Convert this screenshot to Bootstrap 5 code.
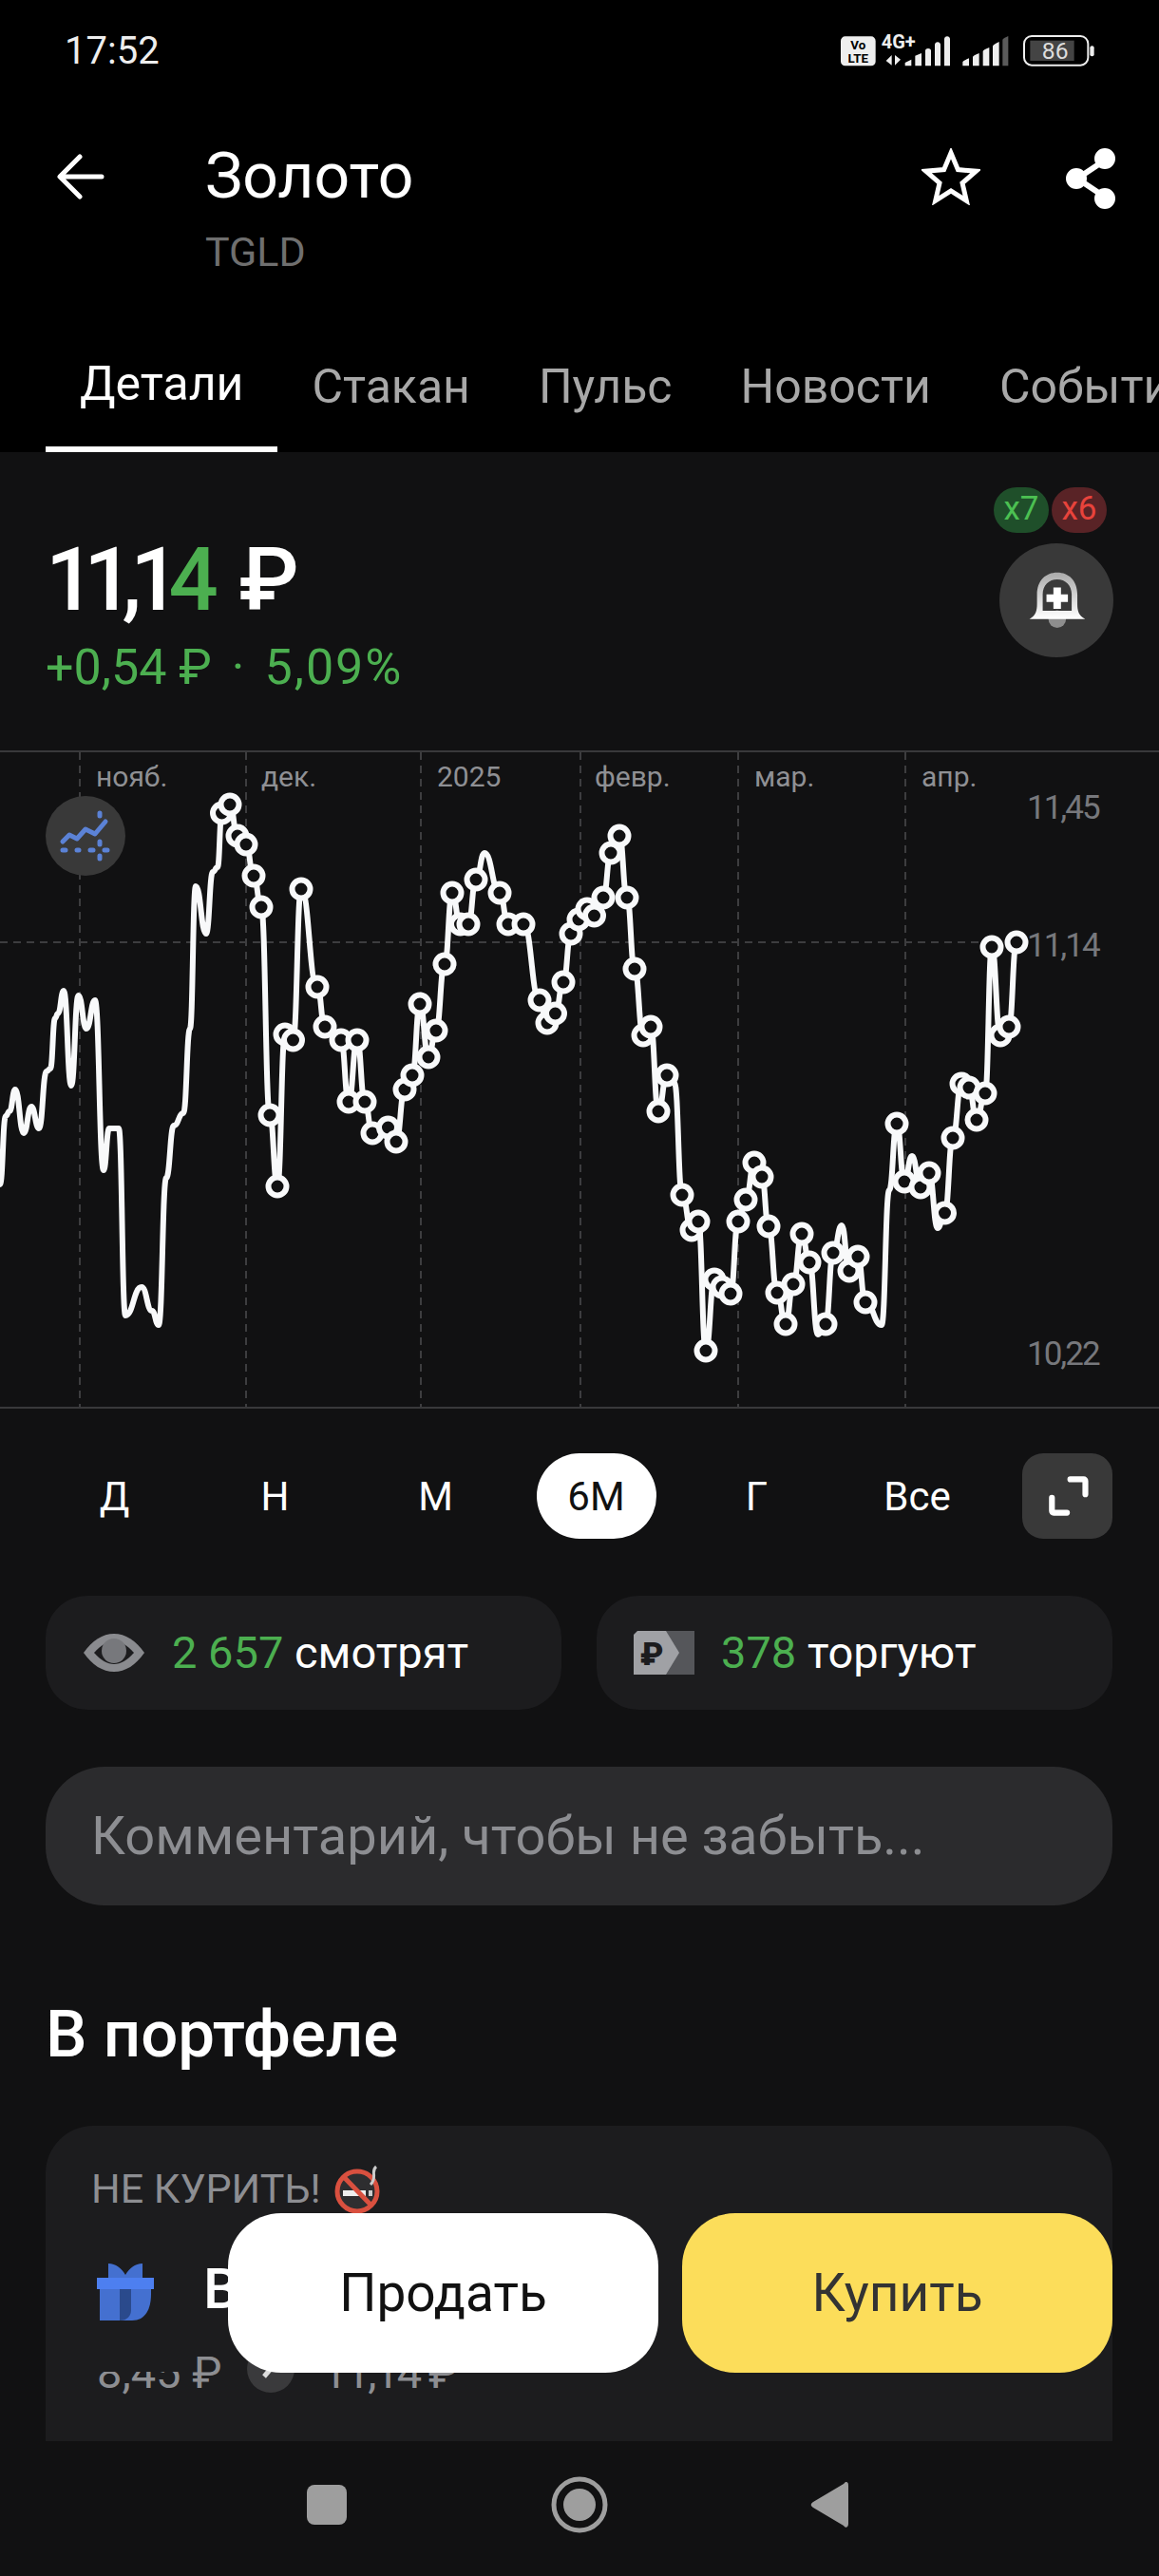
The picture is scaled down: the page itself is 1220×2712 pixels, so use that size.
<!DOCTYPE html>
<html lang="ru">
<head>
  <meta charset="UTF-8">
  <title>Золото TGLD</title>
  <link rel="stylesheet" href="https://cdn.jsdelivr.net/npm/bootstrap@5.3.0/dist/css/bootstrap.min.css">
  <style>
    body {
      margin: 0;
      background: #111112;
      font-family: Roboto, "Liberation Sans", sans-serif;
      color: #fff;
    }
    .app-screen { width: 1220px; height: 2712px; background: #111112; }
    .top-head { background: #000; height: 476px; }
    .status-row { height: 106px; padding-left: 68px; }
    .status-time { font-size: 40px; line-height: 108px; color: #eee; }
    .title-row { height: 170px; padding: 0 44px 0 60px; }
    .back-icon { margin-top: 56px; }
    .title-text { margin-left: 106px; }
    .title-name { font-size: 66px; line-height: 74px; margin: 43px 0 0; font-weight: 400; }
    .title-code { font-size: 43px; line-height: 50px; margin-top: 17px; color: #6f6f6f; }
    .head-actions { margin-top: 50px; gap: 88px; }
    .tabs-row { padding-left: 48px; height: 200px; gap: 0; }
    .tab-item {
      font-size: 50px; line-height: 60px; color: #a8a8a8; padding: 62px 36px 0; height: 100%;
      white-space: nowrap; flex: none;
    }
    .tab-item.active { color: #fff; border-bottom: 6px solid #fff; }

    .price-block { height: 314px; padding: 36px 48px 0; }
    .price-value {
      font-size: 92px; line-height: 110px; font-weight: 500; margin-top: 44px;
      letter-spacing: -6px; word-spacing: 11px;
    }
    .price-int { letter-spacing: -12px; }
    .tone-green { color: #4caf50; }
    .price-change { font-size: 52px; line-height: 60px; margin-top: 7px; }
    .change-sep { margin: 0 21px; }
    .change-pct { letter-spacing: 2px; }
    .lever-tag {
      display: inline-block; width: 58px; height: 48px; border-radius: 24px; text-align: center;
      font-size: 35px; line-height: 46px;
    }
    .lever-long { background: #1f4f2a; color: #4cc052; }
    .lever-short { background: #592326; color: #e8433c; margin-left: 3px; }
    .lever-row { margin: 1px 6px 0 -6px; }
    .bell-btn {
      width: 120px; height: 120px; border-radius: 50%; background: #393939; margin-top: 11px;
    }

    .chart-block { height: 693px; border-top: 2px solid #39393b; border-bottom: 2px solid #39393b; }
    .chart-svg { display: block; }
    .axis-month { font-size: 30px; fill: #8f9094; }
    .axis-price { font-size: 35px; fill: #77787c; letter-spacing: -2px; }
    .mode-toggle {
      top: 46px; left: 48px; width: 84px; height: 84px; border-radius: 50%; background: #393939;
    }

    .period-row { padding: 47px 49px 0 36px; }
    .period-cell {
      width: 169px; height: 90px; font-size: 42px; line-height: 92px; text-align: center; flex: none;
    }
    .period-cell span { display: inline-block; height: 90px; }
    .period-cell.active span { width: 126px; background: #fff; color: #111; border-radius: 45px; }
    .expand-btn { width: 95px; height: 90px; border-radius: 22px; background: #393939; }

    .stat-row { padding: 60px 49px 0 48px; gap: 37px; }
    .stat-pill {
      flex: 1 1 0; height: 120px; background: #1c1c1e; border-radius: 44px; font-size: 47px;
      padding-left: 39px; white-space: nowrap;
    }
    .stat-pill svg { flex: none; margin-right: 28px; }

    .comment-box.form-control {
      margin: 60px 49px 0 48px; width: 1123px; height: 146px; background: #2b2b2d; border: 0;
      border-radius: 62px; color: #8d8e92; font-size: 56px; line-height: 146px; padding: 0 0 0 48px;
      font-family: inherit;
    }
    .section-title { font-size: 69px; line-height: 80px; font-weight: 500; margin: 96px 0 0 48px; }

    .holding-card {
      margin: 56px 49px 0 48px; height: 420px; background: #1c1c1e; border-radius: 50px;
      padding: 36px 0 0 48px;
    }
    .holding-tag { font-size: 43px; line-height: 60px; color: #8d8e92; }
    .holding-tag svg { margin-left: 14px; vertical-align: -12px; }
    .holding-title { margin-top: 48px; margin-left: 6px; height: 62px; }
    .holding-name { font-size: 60px; line-height: 60px; margin: -6px 0 0 52px; font-weight: 500; }
    .holding-prices {
      font-size: 47px; line-height: 50px; color: #8d8e92; margin-top: 29px; margin-left: 6px;
    }
    .holding-prices svg { margin: -8px 29px 0 27px; }
    .price-now { letter-spacing: -2.5px; }
    .price-masked { display: inline-block; position: relative; }
    /* верх цифр в кадре скрыт */
    .price-masked::after {
      content: ""; position: absolute; left: -2px; right: -2px; top: 0; height: 24px; background: #1c1c1e;
    }

    .action-bar { left: 240px; top: 2330px; gap: 25px; }
    .action-btn.btn {
      width: 453px; height: 168px; border-radius: 56px; border: 0; font-size: 55px;
      font-family: inherit; padding: 0;
    }
    .action-sell.btn { background: #fff; color: #111; }
    .action-buy.btn { background: #fcdd5a; color: #333; }
    .system-nav { left: 0; right: 0; bottom: 0; height: 142px; background: #111112; }
  </style>
</head>
<body>
<div class="app-screen position-relative overflow-hidden">

  <header class="top-head">
    <div class="status-row d-flex justify-content-between align-items-start">
      <div class="status-time">17:52</div>
      <svg width="380" height="100" viewBox="0 0 1140 300">
        <rect x="135" y="115" width="110" height="93" rx="14" fill="#eee"/>
        <text x="190" y="156" font-size="40" font-weight="700" text-anchor="middle" fill="#000">Vo</text>
        <text x="190" y="197" font-size="40" font-weight="700" text-anchor="middle" fill="#000">LTE</text>
        <text x="263" y="154" font-size="60" font-weight="700" fill="#eee">4G+</text>
        <path d="M296 174v32l-18-14zM306 174v32l18-18z" fill="#eee"/>
        <g fill="#eee">
          <path d="M338 208v-10l20-10v20zM370 208v-32l20-8v40zM402 208v-48q0-6 9-7 9 1 9 7v48zM432 208v-66q0-8 9-9 9 1 9 9v66zM462 208v-84q0-8 9-9 9 1 9 9v84z"/>
          <path d="M520 208v-12q0-4 20-12v24zM552 208v-28q0-4 20-12v40zM584 208v-46q0-4 20-12v58zM615 208v-62q0-4 20-14v76z"/>
        </g>
        <path d="M646 208v-82q0-4 18-12v94z" fill="#5a5a5a"/>
        <rect x="714" y="114" width="202" height="92" rx="24" fill="none" stroke="#eee" stroke-width="6"/>
        <rect x="733" y="128" width="139" height="64" fill="#444"/>
        <text x="812" y="186" font-size="74" text-anchor="middle" fill="#ddd">86</text>
        <rect x="922" y="145" width="13" height="33" rx="6" fill="#eee"/>
      </svg>
    </div>

    <div class="title-row d-flex align-items-start">
      <svg class="back-icon" width="50" height="48" viewBox="0 0 50 48" fill="none" stroke="#fff" stroke-width="5" stroke-linecap="round" stroke-linejoin="round">
        <path d="M47 24H4M24 3 3 24l21 21"/>
      </svg>
      <div class="title-text flex-grow-1">
        <h1 class="title-name">Золото</h1>
        <div class="title-code">TGLD</div>
      </div>
      <div class="head-actions d-flex">
        <svg width="62" height="60" viewBox="0 0 62 60"><path d="M31 5l7.4 17.6 19 1.6-14.4 12.5 4.3 18.6L31 45l-16.300 10.300 4.300-18.600L4.600 24.200l19-1.600z" fill="none" stroke="#fff" stroke-width="5"/></svg>
        <svg width="56" height="64" viewBox="0 0 56 64" fill="#fff" stroke="#fff" stroke-width="6">
          <path d="M44 12 14 32l30 20" fill="none"/>
          <circle cx="43" cy="11" r="8"/><circle cx="13" cy="32" r="8"/><circle cx="43" cy="53" r="8"/>
        </svg>
      </div>
    </div>

    <nav class="nav flex-nowrap overflow-hidden tabs-row">
      <a class="tab-item active d-flex align-items-center text-decoration-none" href="#">Детали</a>
      <a class="tab-item d-flex align-items-center text-decoration-none" href="#">Стакан</a>
      <a class="tab-item d-flex align-items-center text-decoration-none" href="#">Пульс</a>
      <a class="tab-item d-flex align-items-center text-decoration-none" href="#">Новости</a>
      <a class="tab-item d-flex align-items-center text-decoration-none" href="#">События</a>
    </nav>
  </header>

  <section class="price-block d-flex justify-content-between">
    <div>
      <div class="price-value"><span class="price-int">11,1</span><span class="tone-green">4</span> ₽</div>
      <div class="price-change tone-green">+0,54 ₽<span class="change-sep">·</span><span class="change-pct">5,09%</span></div>
    </div>
    <div class="text-center">
      <div class="lever-row d-flex"><span class="lever-tag lever-long">x7</span><span class="lever-tag lever-short">x6</span></div>
      <div class="bell-btn d-flex align-items-center justify-content-center">
        <svg width="63" height="63" viewBox="240 335 190 190">
          <defs><linearGradient id="bellShade" x1="0" y1="0" x2="0" y2="1"><stop offset="0" stop-color="#aaa"/><stop offset="1" stop-color="#fff"/></linearGradient></defs>
          <circle cx="336" cy="488" r="28" fill="#8e8e8e"/>
          <path fill="url(#bellShade)" fill-rule="evenodd" d="M248 488c20-10 24-26 24-48v-30c0-45 28-70 64-70s64 25 64 70v30c0 22 4 38 25 48zM290 462h92v-52c0-30-20-48-46-48s-46 18-46 48z"/>
          <path fill="#fff" d="M324 388h24v22h22v24h-22v22h-24v-22h-22v-24h22z"/>
        </svg>
      </div>
    </div>
  </section>

  <section class="chart-block position-relative">
    <svg id="priceChart" class="chart-svg" width="1220" height="689" viewBox="0 792 1220 689">
      <g stroke="#3d3d3f" stroke-width="2" stroke-dasharray="8 6" fill="none">
        <path d="M84 792V1481M259 792V1481M443 792V1481M611 792V1481M777 792V1481M953 792V1481M0 992H1040"/>
      </g>
      <text class="axis-month" x="101" y="828">нояб.</text>
      <text class="axis-month" x="275" y="828">дек.</text>
      <text class="axis-month" x="460" y="828">2025</text>
      <text class="axis-month" x="626" y="828">февр.</text>
      <text class="axis-month" x="794" y="828">мар.</text>
      <text class="axis-month" x="970" y="828">апр.</text>
      <text class="axis-price" x="1081" y="862">11,45</text>
      <text class="axis-price" x="1081" y="1007">11,14</text>
      <text class="axis-price" x="1081" y="1437">10,22</text>
    </svg>
    <div class="mode-toggle position-absolute">
      <svg width="84" height="84" viewBox="48 838 84 84" fill="none" stroke="#5b82d6" stroke-linecap="round" stroke-linejoin="round">
        <path stroke-width="5" d="M66 886l7-7 8 4 9-10 10 5 11-13"/>
        <path stroke-width="5" d="M66 895h3M81 895h2M95 895h3M110 895h3M105 856v3M105 886v3M105 901v3"/>
      </svg>
    </div>
  </section>

  <div class="period-row d-flex align-items-center">
    <div class="period-cell"><span>Д</span></div>
    <div class="period-cell"><span>Н</span></div>
    <div class="period-cell"><span>М</span></div>
    <div class="period-cell active"><span>6М</span></div>
    <div class="period-cell"><span>Г</span></div>
    <div class="period-cell"><span>Все</span></div>
    <div class="expand-btn d-flex align-items-center justify-content-center ms-auto">
      <svg width="44" height="44" viewBox="0 0 50 50" fill="none" stroke="#fff" stroke-width="7" stroke-linecap="round" stroke-linejoin="round">
        <path d="M28 5h16a2 2 0 0 1 2 2v16M6 27v16a2 2 0 0 0 2 2h16"/>
      </svg>
    </div>
  </div>

  <div class="stat-row d-flex">
    <div class="stat-pill d-flex align-items-center">
      <svg width="66" height="42" viewBox="0 0 66 42">
        <path d="M1 21C10 8 21 1 33 1s23 7 32 20c-9 13-20 20-32 20S10 34 1 21z" fill="#8a8b8f"/>
        <path d="M12 21c7-8 14-12 21-12s14 4 21 12c-7 8-14 12-21 12s-14-4-21-12z" fill="#1c1c1e"/>
        <circle cx="33" cy="19" r="13" fill="#77787c"/>
      </svg>
      <span><span class="tone-green">2 657</span> смотрят</span>
    </div>
    <div class="stat-pill d-flex align-items-center">
      <svg width="64" height="46" viewBox="0 0 64 46">
        <rect x="20" y="0" width="44" height="46" fill="#55565a"/>
        <path d="M4 0h30l14 23-14 23H0V4z" fill="#a0a1a5"/>
        <text x="19" y="36" font-size="34" font-weight="900" text-anchor="middle" fill="#1c1c1e">₽</text>
      </svg>
      <span class="stat-after-tag"><span class="tone-green">378</span> торгуют</span>
    </div>
  </div>

  <div class="comment-box form-control">Комментарий, чтобы не забыть...</div>

  <h2 class="section-title">В портфеле</h2>

  <div class="holding-card">
    <div class="holding-tag">НЕ КУРИТЬ!<svg width="50" height="52" viewBox="0 0 50 52">
      <circle cx="24" cy="28" r="21" fill="#2e2e30" stroke="#d9503f" stroke-width="5"/>
      <path d="M9 30h24" stroke="#eee" stroke-width="6"/><path d="M36 30h4" stroke="#ccc" stroke-width="6"/>
      <path d="M10 13l29 30" stroke="#d9503f" stroke-width="5"/>
      <path d="M44 2c-5 4-1 8-3 14-1 3-2 4-3 5" stroke="#ccc" stroke-width="3" fill="none"/>
    </svg></div>
    <div class="holding-title d-flex align-items-center">
      <svg width="60" height="60" viewBox="0 0 60 60" class="flex-none">
        <path d="M12 0c8 0 14 5 18 12C34 5 40 0 48 0v15H12z" fill="#4470d0"/>
        <path d="M3 44V27h54v5c0 16-6 28-20 28H3z" fill="#4470d0"/>
        <path d="M24 27h12v22c0 6-4 11-12 11z" fill="#2a4a8c"/>
        <rect x="0" y="15" width="60" height="12" fill="#4d7ff0"/>
      </svg>
      <span class="holding-name">В</span>
    </div>
    <div class="holding-prices d-flex align-items-center">
      <span><span class="price-masked">8,45</span> ₽</span>
      <svg width="50" height="50" viewBox="0 0 50 50">
        <circle cx="25" cy="25" r="25" fill="#3a3a3c"/>
        <path d="M18 33l12-14" stroke="#ddd" stroke-width="5"/>
      </svg>
      <span class="price-now">11,14 ₽</span>
    </div>
  </div>

  <div class="action-bar position-absolute d-flex">
    <button class="action-btn action-sell btn">Продать</button>
    <button class="action-btn action-buy btn">Купить</button>
  </div>

  <div class="system-nav position-absolute">
    <svg width="1220" height="142" viewBox="0 2570 1220 142">
      <rect x="323" y="2616" width="42" height="42" rx="8" fill="#9e9e9e"/>
      <circle cx="610" cy="2637" r="27" fill="none" stroke="#9e9e9e" stroke-width="5"/>
      <circle cx="610" cy="2637" r="17" fill="#9e9e9e"/>
      <path d="M890 2613c3 0 3 2 3 4v40c0 4-3 5-5 2l-32-19c-3-2-3-4 0-6l32-19z" fill="#9e9e9e"/>
    </svg>
  </div>
</div>

<script src="https://cdn.jsdelivr.net/npm/bootstrap@5.3.0/dist/js/bootstrap.bundle.min.js"></script>
<script>
  // [x, y, hasDot]
  const points = [
    [0,1247],[6,1175],[10,1170],[16,1147],[25,1193],[33,1165],[41,1188],[49,1128],[53,1125],[58,1072],[61,1067],
    [67,1043],[75,1143],[82.5,1048],[91,1083],[100,1053],[109,1232],[115,1188],[125,1188],[132,1385],[149,1355],
    [160,1380],[167,1395],[175,1240],[183,1185],[193,1172],[200,1083],[206,933],[217,983],[224,918],[229,913],
    [233.5,856,1],[242,847,1],[250,880,1],[259,889,1],[267,922,1],[275,955,1],[284,1174,1],[292,1249,1],[300,1089,1],
    [308.5,1095,1],[317,936,1],[334,1039,1],[342,1081,1],[359,1095,1],[367,1160,1],[376,1095,1],[384,1160,1],
    [392,1193,1],[408.5,1187,1],[417,1202,1],[426,1147,1],[434,1132,1],[442,1057,1],[451,1113,1],[459,1085,1],
    [468,1015,1],[476,940,1],[484.5,973,1],[493,973,1],[501,926,1],[510,898],[526,940,1],[535,973,1],[551,973,1],
    [568,1053,1],[576,1077,1],[584.5,1067,1],[593,1034,1],[601,983,1],[609,968,1],[618,957,1],[625.5,964,1],
    [635,945,1],[643,898,1],[652,880,1],[660,945,1],[668,1020,1],[677,1090,1],[685,1081,1],[693,1170,1],[702,1132,1],
    [710,1140],[718,1258,1],[728,1295,1],[735,1286,1],[743,1422,1],[752,1347,1],[760,1355,1],[769,1362,1],[777,1286,1],
    [785,1263,1],[794,1224,1],[802,1239,1],[809,1291,1],[818,1361,1],[827,1394,1],[835,1352,1],[844,1299,1],[852,1329,1],
    [861,1405],[869,1394,1],[877,1319,1],[886,1290],[894,1338,1],[903,1323,1],[911,1371,1],[928,1395],[936,1253],
    [944,1183,1],[952,1244,1],[960,1217],[969,1250,1],[978,1235,1],[987,1293],[994.5,1277,1],[1003,1198,1],
    [1012,1141,1],[1020,1145,1],[1028,1179,1],[1037,1151,1],[1044,997,1],[1053,1090,1],[1062,1081,1],[1070,992,1]
  ];

  const svgNS = "http://www.w3.org/2000/svg";
  const chart = document.getElementById("priceChart");

  let d = "M" + points[0][0] + " " + points[0][1];
  for (let i = 1; i < points.length; i++) {
    const [x0, y0] = points[i - 1];
    const [x1, y1] = points[i];
    const mid = (x0 + x1) / 2;
    d += ` C${mid} ${y0} ${mid} ${y1} ${x1} ${y1}`;
  }
  const line = document.createElementNS(svgNS, "path");
  line.setAttribute("d", d);
  line.setAttribute("fill", "none");
  line.setAttribute("stroke", "#f8f9fa");
  line.setAttribute("stroke-width", "6");
  chart.appendChild(line);

  points.filter(p => p[2]).forEach(p => {
    const dot = document.createElementNS(svgNS, "circle");
    dot.setAttribute("cx", p[0]);
    dot.setAttribute("cy", p[1]);
    dot.setAttribute("r", "9.5");
    dot.setAttribute("fill", "#111112");
    dot.setAttribute("stroke", "#f8f9fa");
    dot.setAttribute("stroke-width", "6");
    chart.appendChild(dot);
  });
</script>
</body>
</html>
